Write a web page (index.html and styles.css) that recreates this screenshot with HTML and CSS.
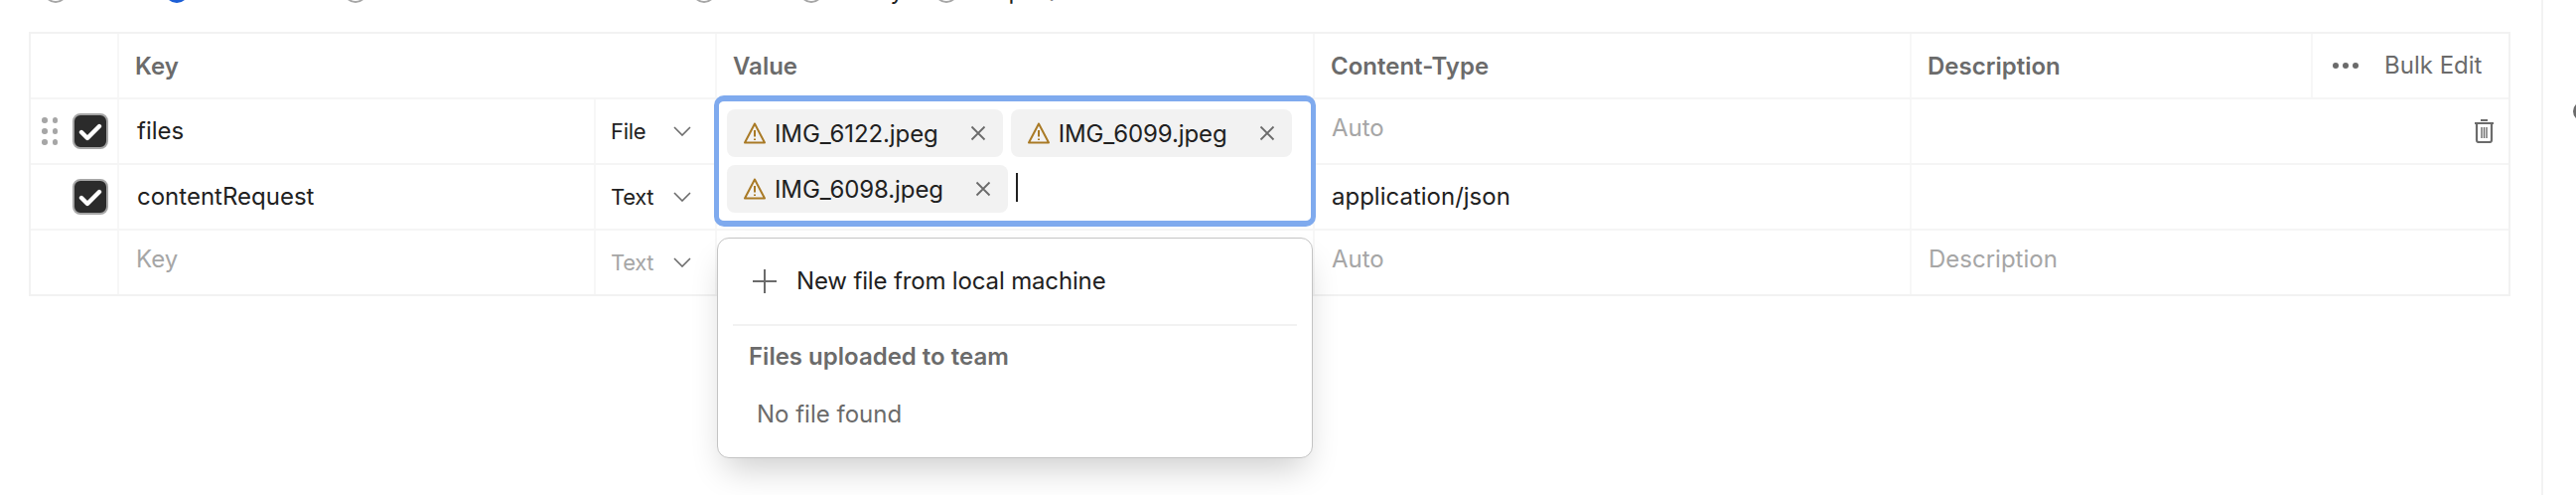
FILE: index.html
```html
<!DOCTYPE html>
<html lang="en">
<head>
    <meta charset="UTF-8">
    <title>Form data</title>
    <link rel="stylesheet" href="styles.css">
</head>
<body>
    <div class="page">
        <div class="content">
            <!-- Body type options, mostly scrolled out of view -->
            <div class="body-types">
                <label class="body-type"><span class="radio"></span>none</label>
                <label class="body-type"><span class="radio radio-on"></span>form-data</label>
                <label class="body-type"><span class="radio"></span>x-www-form-urlencoded</label>
                <label class="body-type"><span class="radio"></span>raw</label>
                <label class="body-type"><span class="radio"></span>binary</label>
                <label class="body-type"><span class="radio"></span>GraphQL</label>
            </div>

            <div class="params">
                <!-- Header -->
                <div class="row">
                    <div class="cell"></div>
                    <div class="cell head">Key</div>
                    <div class="cell head">Value</div>
                    <div class="cell head">Content-Type</div>
                    <div class="cell cell-last head cell-desc">
                        <span class="desc-title">Description</span>
                        <div class="bulk">
                            <span class="more"><i></i><i></i><i></i></span>
                            <span>Bulk Edit</span>
                        </div>
                    </div>
                </div>

                <!-- files -->
                <div class="row">
                    <div class="cell cell-check">
                        <span class="grip"><i></i><i></i><i></i><i></i><i></i><i></i></span>
                        <span class="checkbox">
                            <svg viewBox="0 0 24 24" width="24" height="24"><path d="M3 13l6 6L21 7" fill="none" stroke="#fff" stroke-width="4.4" stroke-linecap="round" stroke-linejoin="round"/></svg>
                        </span>
                    </div>
                    <div class="cell cell-key">files</div>
                    <div class="cell cell-type">File
                        <svg class="chevron" viewBox="0 0 18 10" width="18" height="10"><path d="M1 1l8 8 8-8" fill="none" stroke="#6b6b6b" stroke-width="1.6"/></svg>
                    </div>
                    <div class="cell cell-value">
                        <div class="file-editor">
                            <span class="chip">
                                <svg class="warn" viewBox="0 0 22 22" width="22" height="22"><path d="M11 1.5L1 20.5h20z" fill="none" stroke="#a97a26" stroke-width="2" stroke-linejoin="round"/><path d="M11 8v6.5M11 16.5v1.6" stroke="#a97a26" stroke-width="2"/></svg>
                                <span class="chip-name">IMG_6122.jpeg</span>
                                <svg class="close" viewBox="0 0 16 16" width="16" height="16"><path d="M1.5 1.5l13 13M14.5 1.5l-13 13" stroke="#6b6b6b" stroke-width="1.8"/></svg>
                            </span>
                            <span class="chip">
                                <svg class="warn" viewBox="0 0 22 22" width="22" height="22"><path d="M11 1.5L1 20.5h20z" fill="none" stroke="#a97a26" stroke-width="2" stroke-linejoin="round"/><path d="M11 8v6.5M11 16.5v1.6" stroke="#a97a26" stroke-width="2"/></svg>
                                <span class="chip-name">IMG_6099.jpeg</span>
                                <svg class="close" viewBox="0 0 16 16" width="16" height="16"><path d="M1.5 1.5l13 13M14.5 1.5l-13 13" stroke="#6b6b6b" stroke-width="1.8"/></svg>
                            </span>
                            <span class="chip">
                                <svg class="warn" viewBox="0 0 22 22" width="22" height="22"><path d="M11 1.5L1 20.5h20z" fill="none" stroke="#a97a26" stroke-width="2" stroke-linejoin="round"/><path d="M11 8v6.5M11 16.5v1.6" stroke="#a97a26" stroke-width="2"/></svg>
                                <span class="chip-name">IMG_6098.jpeg</span>
                                <svg class="close" viewBox="0 0 16 16" width="16" height="16"><path d="M1.5 1.5l13 13M14.5 1.5l-13 13" stroke="#6b6b6b" stroke-width="1.8"/></svg>
                            </span>
                            <span class="caret"></span>
                        </div>

                        <div class="file-menu">
                            <div class="menu-new">
                                <svg viewBox="0 0 24 24" width="24" height="24"><path d="M12 0v24M0 12h24" stroke="#6b6b6b" stroke-width="2"/></svg>
                                New file from local machine
                            </div>
                            <div class="menu-line"></div>
                            <div class="menu-title">Files uploaded to team</div>
                            <div class="menu-empty">No file found</div>
                        </div>
                    </div>
                    <div class="cell cell-hint faint">Auto</div>
                    <div class="cell cell-last cell-delete">
                        <svg viewBox="0 0 21 24" width="21" height="24"><path d="M7 1h7M1 4h19" stroke="#6b6b6b" stroke-width="2.2"/><path d="M3 4.5v16.5a2 2 0 0 0 2 2h11a2 2 0 0 0 2-2V4.5" fill="none" stroke="#6b6b6b" stroke-width="2.2"/><path d="M8 8v11M10.5 8v11M13 8v11" stroke="#6b6b6b" stroke-width="1.4"/></svg>
                    </div>
                </div>

                <!-- contentRequest -->
                <div class="row">
                    <div class="cell cell-check">
                        <span class="checkbox">
                            <svg viewBox="0 0 24 24" width="24" height="24"><path d="M3 13l6 6L21 7" fill="none" stroke="#fff" stroke-width="4.4" stroke-linecap="round" stroke-linejoin="round"/></svg>
                        </span>
                    </div>
                    <div class="cell cell-key">contentRequest</div>
                    <div class="cell cell-type">Text
                        <svg class="chevron" viewBox="0 0 18 10" width="18" height="10"><path d="M1 1l8 8 8-8" fill="none" stroke="#6b6b6b" stroke-width="1.6"/></svg>
                    </div>
                    <div class="cell"></div>
                    <div class="cell cell-plain">application/json</div>
                    <div class="cell cell-last"></div>
                </div>

                <!-- Empty row -->
                <div class="row row-last">
                    <div class="cell"></div>
                    <div class="cell cell-hint faint">Key</div>
                    <div class="cell cell-type faint">Text
                        <svg class="chevron" viewBox="0 0 18 10" width="18" height="10"><path d="M1 1l8 8 8-8" fill="none" stroke="#6b6b6b" stroke-width="1.6"/></svg>
                    </div>
                    <div class="cell"></div>
                    <div class="cell cell-hint faint">Auto</div>
                    <div class="cell cell-last cell-hint faint">Description</div>
                </div>
            </div>
        </div>

        <div class="side">
            <span class="side-icon"></span>
        </div>
    </div>
</body>
</html>
```

FILE: styles.css
```css
* {
    box-sizing: border-box;
}

html, body {
    height: 100%;
    margin: 0;
    overflow: hidden;
    background: #fff;
}

body {
    font-family: 'Inter', 'Liberation Sans', sans-serif;
    font-size: 24px;
    line-height: 32px;
    color: #212121;
}

.page {
    display: flex;
    height: 100%;
}

.content {
    flex: 0 0 2559px;
    padding-left: 29px;
}

/* Body type radios */
.body-types {
    display: flex;
    height: 24px;
    margin-top: -21px;
    margin-bottom: 29px;
    padding-left: 15px;
    line-height: 24px;
}

.body-type {
    display: flex;
    align-items: center;
    gap: 10px;
}

.body-type:nth-child(1) { width: 122px; }
.body-type:nth-child(2) { width: 180px; }
.body-type:nth-child(3) { width: 351px; }
.body-type:nth-child(4) { width: 108px; }
.body-type:nth-child(5) { width: 136px; }

.radio {
    width: 24px;
    height: 24px;
    border: 2px solid #a6a6a6;
    border-radius: 50%;
}

.radio-on {
    border: 7px solid #1d5fd6;
}

/* Table */
.params {
    width: 2499px;
    border: 2px solid #f2f2f2;
}

.row {
    display: grid;
    grid-template-columns: 89px 480px 122px 602px 601px 601px;
    height: 66px;
    border-bottom: 2px solid #f5f5f5;
}

.row:first-child {
    grid-template-columns: 89px 602px 602px 601px 601px;
}

.row-last {
    height: 64px;
    border-bottom: none;
}

.cell {
    display: flex;
    align-items: center;
    padding: 0 16px;
    border-right: 2px solid #f7f7f7;
}

.cell-last {
    border-right: none;
}

.head {
    padding-top: 2px;
    font-weight: 600;
    color: #6b6b6b;
}

.cell-desc {
    justify-content: space-between;
    padding-top: 0;
    padding-right: 0;
}

.desc-title {
    padding-top: 2px;
}

.bulk {
    display: flex;
    align-items: center;
    gap: 26px;
    width: 199px;
    height: 100%;
    padding-left: 20px;
    border-left: 2px solid #f7f7f7;
    font-weight: 400;
}

.more {
    display: flex;
    gap: 4px;
}

.more i {
    width: 6px;
    height: 6px;
    border-radius: 50%;
    background: #6b6b6b;
}

.cell-check {
    position: relative;
    justify-content: flex-end;
    padding: 0 9px 0 0;
}

.grip {
    position: absolute;
    left: 11px;
    top: 18px;
    display: grid;
    grid-template-columns: 5.5px 5.5px;
    gap: 5.5px 5px;
}

.grip i {
    width: 5.5px;
    height: 5.5px;
    border-radius: 50%;
    background: #a6a6a6;
}

.checkbox {
    display: flex;
    align-items: center;
    justify-content: center;
    width: 36px;
    height: 36px;
    border: 2px solid #a6a6a6;
    border-radius: 8px;
    background: #2b2b2b;
}

.cell-key {
    padding-left: 18px;
}

.cell-type {
    justify-content: space-between;
    padding-left: 15px;
    padding-right: 24px;
    font-size: 22px;
    letter-spacing: -0.3px;
}

.cell-plain {
    padding-left: 17px;
}

.cell-hint {
    padding-left: 17px;
    padding-bottom: 6px;
}

.faint {
    color: #a6a6a6;
}

.cell-delete {
    justify-content: flex-end;
    padding-right: 14px;
}

/* Value editor and its menu lie over the table */
.cell-value {
    position: relative;
}

.file-editor {
    position: absolute;
    z-index: 2;
    left: -3px;
    top: -4px;
    display: flex;
    flex-wrap: wrap;
    align-items: center;
    gap: 8px;
    width: 606px;
    height: 132px;
    padding: 8px;
    border-style: solid;
    border-width: 6px 5px;
    border-color: #7faaee;
    border-radius: 10px;
    background: #fff;
}

.chip {
    display: flex;
    align-items: center;
    height: 48px;
    padding: 0 17px;
    border-radius: 8px;
    letter-spacing: -0.1px;
    background: #f2f2f2;
}

.chip-name {
    padding-top: 2px;
}

.warn {
    margin-right: 9px;
}

.close {
    margin-left: 32px;
}

.caret {
    width: 2px;
    height: 29px;
    margin-bottom: 3px;
    background: #212121;
}

.file-menu {
    position: absolute;
    z-index: 1;
    left: 0;
    top: 139px;
    width: 600px;
    height: 222px;
    border: 1.5px solid #c4c4c4;
    border-radius: 12px;
    background: #fff;
    box-shadow: 0 18px 34px -8px rgba(0, 0, 0, 0.2);
}

.menu-new {
    display: flex;
    align-items: center;
    gap: 20px;
    height: 86px;
    padding-left: 35px;
    letter-spacing: -0.15px;
}

.menu-line {
    height: 2px;
    margin: 0 15px;
    background: #f2f2f2;
}

.menu-title {
    margin-top: 15px;
    padding-left: 31px;
    font-weight: 600;
    color: #6b6b6b;
}

.menu-empty {
    margin-top: 26px;
    padding-left: 39px;
    color: #6b6b6b;
}

/* Right rail */
.side {
    flex: 1;
    position: relative;
    border-left: 2px solid #f2f2f2;
}

.side-icon {
    position: absolute;
    left: 30px;
    top: 102px;
    width: 20px;
    height: 20px;
    border: 3px solid #6b6b6b;
    border-radius: 50%;
}
```
